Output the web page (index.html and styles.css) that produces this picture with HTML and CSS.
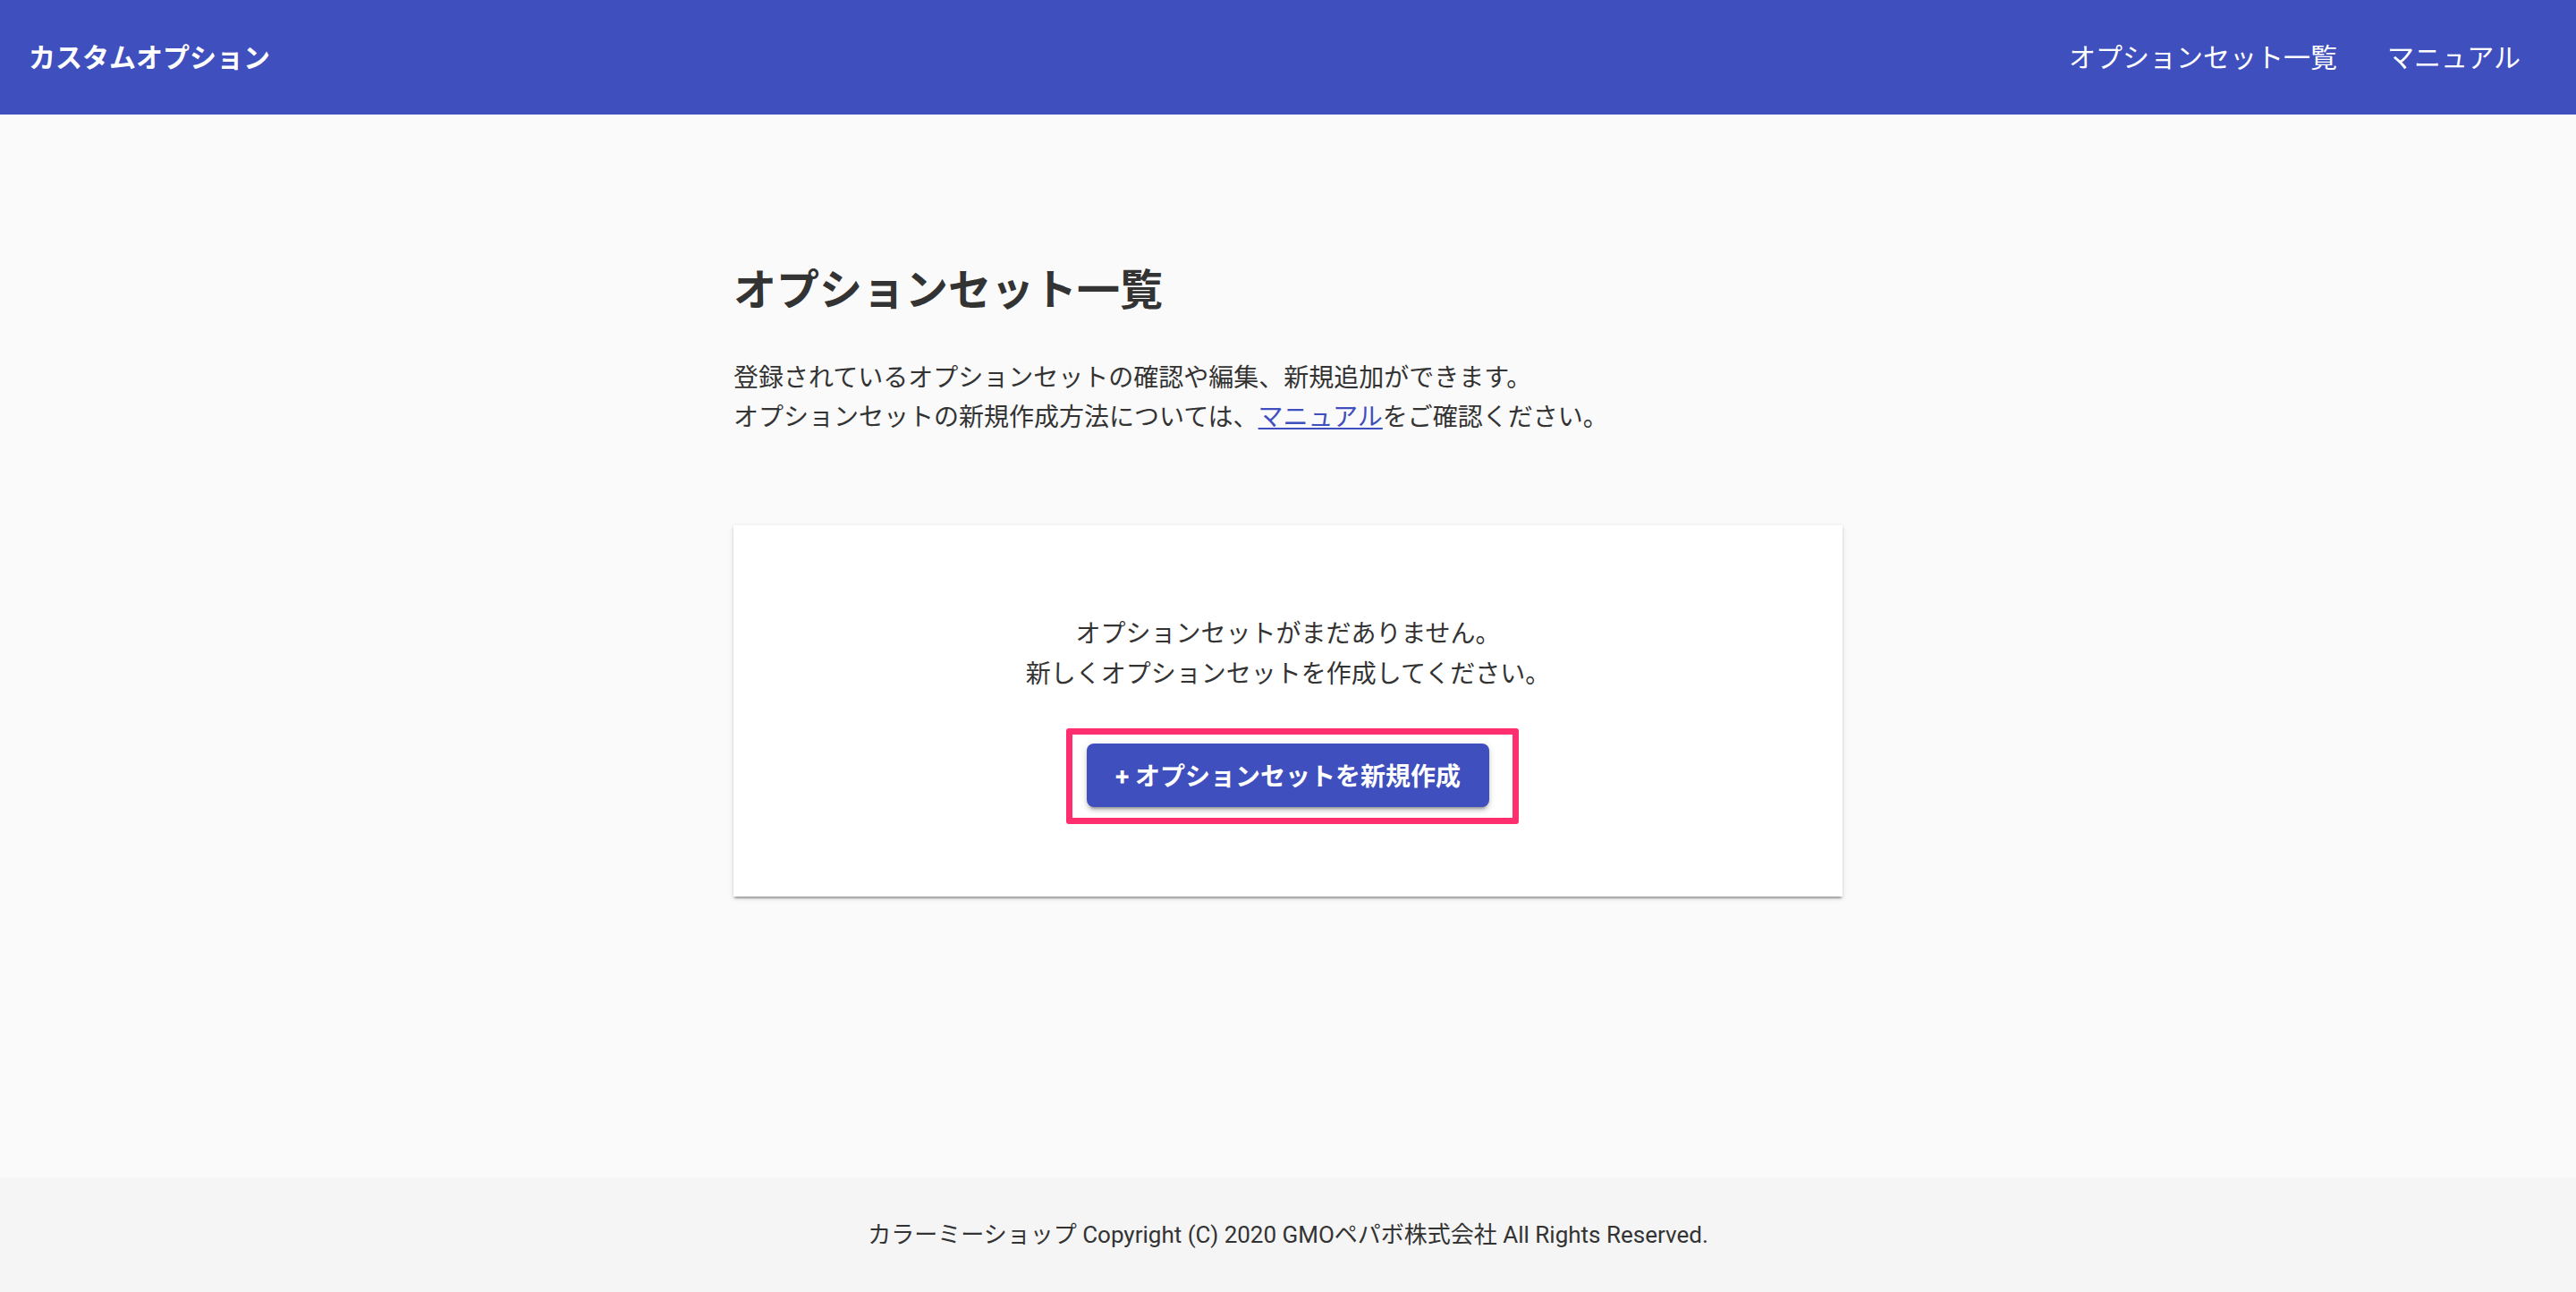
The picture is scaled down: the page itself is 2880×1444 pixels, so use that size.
FILE: index.html
```html
<!DOCTYPE html>
<html lang="ja">
  <head>
    <meta charset="UTF-8" />
    <meta name="viewport" content="width=device-width, initial-scale=1" />
    <title>カスタムオプション</title>
    <link rel="stylesheet" href="styles.css">
  </head>
  <body>
    <!-- Top bar -->
    <header class="app-bar">
      <div class="app-title">カスタムオプション</div>
      <nav class="app-nav">
        <a href="#" class="nav-link">オプションセット一覧</a>
        <a href="#" class="nav-link">マニュアル</a>
      </nav>
    </header>

    <!-- Main content -->
    <main class="main">
      <div class="container">
        <h1 class="page-title">オプションセット一覧</h1>
        <p class="lead">
          登録されているオプションセットの確認や編集、新規追加ができます。<br />
          オプションセットの新規作成方法については、<a href="#" class="text-link">マニュアル</a>をご確認ください。
        </p>

        <!-- Empty state card -->
        <section class="card">
          <p class="empty-text">
            オプションセットがまだありません。<br />
            新しくオプションセットを作成してください。
          </p>
          <div class="card-actions">
            <span class="highlight">
              <button class="btn-primary">+ オプションセットを新規作成</button>
            </span>
          </div>
        </section>
      </div>
    </main>

    <footer class="footer">
      カラーミーショップ Copyright (C) 2020 GMOペパボ株式会社 All Rights Reserved.
    </footer>
  </body>
</html>
```

FILE: styles.css
```css
/* Reset & Base */
* {
  box-sizing: border-box;
  margin: 0;
  padding: 0;
}
html,
body {
  min-height: 100%;
}
body {
  min-height: 100vh;
  display: flex;
  flex-direction: column;
  font-family: Roboto, "Noto Sans CJK JP", sans-serif;
  color: #333;
  background: #fafafa;
}
/* Top bar */
.app-bar {
  height: 128px;
  padding: 0 32px 4px;
  display: flex;
  align-items: center;
  justify-content: space-between;
  background: #3f4fbe;
  color: #fff;
}
.app-title {
  font-size: 30px;
  font-weight: bold;
}
.app-nav {
  display: flex;
  align-items: center;
}
.nav-link {
  padding: 0 28px;
  font-size: 30px;
  color: #fff;
  text-decoration: none;
}
.nav-link:last-child {
  padding-right: 30px;
}
/* Main */
.main {
  flex: 1;
  padding-top: 168px;
}
.container {
  width: 1240px;
  margin: 0 auto;
}
.page-title {
  font-size: 48px;
  line-height: 1.2;
  font-weight: bold;
  color: #333;
}
.lead {
  margin-top: 47px;
  font-size: 28px;
  line-height: 1.6;
}
.text-link {
  color: #3f4fbe;
}
/* Empty state card */
.card {
  margin-top: 97px;
  padding: 100px 0 100px;
  background: #fff;
  text-align: center;
  box-shadow: 0 4px 2px -2px rgba(0, 0, 0, 0.2), 0 2px 2px rgba(0, 0, 0, 0.14),
    0 2px 6px rgba(0, 0, 0, 0.12);
}
.empty-text {
  font-size: 28px;
  line-height: 1.6;
}
.card-actions {
  margin-top: 54px;
  display: flex;
  justify-content: center;
}
.highlight {
  position: relative;
  display: inline-flex;
}
/* Annotation box drawn round the button */
.highlight::after {
  content: "";
  position: absolute;
  top: -17px;
  left: -23px;
  right: -33px;
  bottom: -19px;
  border: 7px solid #ff2e6e;
  border-radius: 3px;
  pointer-events: none;
}
.btn-primary {
  height: 71px;
  padding: 0 32px;
  border: none;
  border-radius: 8px;
  font-family: Roboto, "Noto Sans CJK JP", sans-serif;
  font-size: 28px;
  font-weight: bold;
  color: #fff;
  background: #3f4fbe;
  cursor: pointer;
  box-shadow: 0 6px 2px -4px rgba(0, 0, 0, 0.2), 0 4px 4px rgba(0, 0, 0, 0.14),
    0 2px 10px rgba(0, 0, 0, 0.12);
}
/* Footer */
.footer {
  height: 128px;
  padding-bottom: 6px;
  display: flex;
  align-items: center;
  justify-content: center;
  font-size: 26px;
  color: #333;
  background: #f5f5f5;
}
```
